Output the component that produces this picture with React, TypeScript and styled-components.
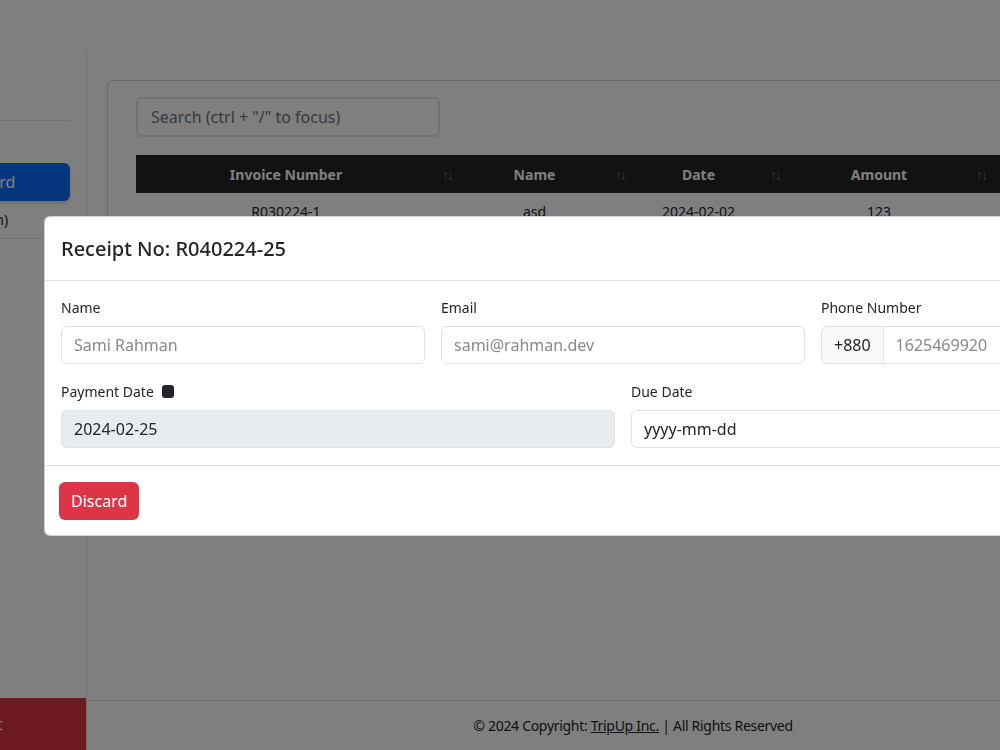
import styled, { createGlobalStyle } from 'styled-components';
import { LogOut } from 'lucide-react';

const GlobalStyle = createGlobalStyle`
  html, body {
    margin: 0;
    height: 100%;
    overflow: hidden;
  }
  body {
    font-family: "Noto Sans", "Open Sans", sans-serif;
    color: #212529;
    background: #ffffff;
  }
  #root {
    height: 100%;
  }
  * {
    box-sizing: border-box;
  }
`;

// the shell is wider than the window; the view sits scrolled to the right
const Shell = styled.div`
  display: grid;
  grid-template-rows: 52px 1fr;
  width: 1317px;
  height: 750px;
  margin-left: -138px;
`;

const TopBar = styled.header`
  background: #ffffff;
`;

const Row = styled.div`
  display: flex;
  min-height: 0;
`;

const Sidebar = styled.aside`
  width: 225px;
  flex-shrink: 0;
  display: flex;
  flex-direction: column;
  border-right: 1px solid #dee2e6;
`;

const Brand = styled.div`
  height: 68px;
  display: flex;
  align-items: center;
  padding: 0 16px;
  font-weight: 600;
  font-size: 18px;
`;

const Divider = styled.hr`
  margin: 0 16px;
  border: none;
  border-top: 1px solid #dee2e6;
`;

const NavButton = styled.a`
  display: flex;
  align-items: center;
  justify-content: center;
  height: 38px;
  margin: 42px 16px 0;
  border-radius: 6px;
  background: #0d6efd;
  color: #ffffff;
  font-size: 16px;
  text-decoration: none;
  box-shadow: 0 2px 4px rgba(0, 0, 0, 0.15);
`;

const NavItem = styled.a`
  display: flex;
  align-items: center;
  justify-content: center;
  height: 38px;
  padding-right: 24px;
  border-bottom: 1px solid #dee2e6;
  color: #212529;
  font-size: 14px;
  text-decoration: none;
`;

const LogoutButton = styled.button`
  margin-top: auto;
  height: 52px;
  display: flex;
  align-items: center;
  justify-content: center;
  gap: 8px;
  padding-right: 26px;
  border: none;
  background: #dc3545;
  color: #ffffff;
  font-family: inherit;
  font-size: 16px;
`;

const Main = styled.main`
  flex: 1;
  display: flex;
  flex-direction: column;
  min-width: 0;
`;

const Content = styled.div`
  flex: 1;
  padding: 28px 20px 0;
`;

const Card = styled.section`
  border: 1px solid rgba(0, 0, 0, 0.175);
  border-radius: 6px;
  padding: 16px 28px 24px;
  box-shadow: 0 1px 3px rgba(0, 0, 0, 0.06);
`;

const SearchInput = styled.input`
  width: 304px;
  height: 40px;
  border: 2px solid #dee2e6;
  border-radius: 6px;
  padding: 0 13px;
  font-family: inherit;
  font-size: 16px;
  color: #212529;
  &::placeholder {
    color: #6c757d;
  }
`;

const Table = styled.table`
  width: 100%;
  margin-top: 18px;
  border-collapse: collapse;
  table-layout: fixed;
`;

const Th = styled.th<{ $w?: number }>`
  position: relative;
  width: ${(p) => (p.$w ? `${p.$w}px` : 'auto')};
  height: 38px;
  padding: 0 24px 0 0;
  background: #212529;
  color: #ffffff;
  font-size: 14px;
  font-weight: 700;
  text-align: center;
`;

const SortIcon = styled.span`
  position: absolute;
  right: 8px;
  top: 50%;
  transform: translateY(-50%);
  color: #6c757d;
  font-size: 14px;
  font-weight: 400;
  letter-spacing: -2px;
`;

const Td = styled.td`
  height: 38px;
  padding: 0 24px 0 0;
  border-bottom: 1px solid #dee2e6;
  font-size: 14px;
  text-align: center;
`;

const Footer = styled.footer`
  height: 50px;
  display: flex;
  align-items: center;
  justify-content: center;
  border-top: 1px solid #dee2e6;
  font-size: 14px;
  letter-spacing: -0.3px;
  a {
    color: inherit;
  }
`;

const Backdrop = styled.div`
  position: fixed;
  inset: 0;
  background: rgba(0, 0, 0, 0.5);
`;

const Modal = styled.div`
  position: fixed;
  top: 216px;
  left: 44px;
  width: 1158px;
  background: #ffffff;
  border: 1px solid rgba(0, 0, 0, 0.175);
  border-radius: 6px;
`;

const ModalHeader = styled.div`
  padding: 20px 16px 19px;
  border-bottom: 1px solid #dee2e6;
`;

const ModalTitle = styled.h5`
  margin: 0;
  font-size: 20px;
  font-weight: 500;
  line-height: 24px;
`;

const ModalBody = styled.div`
  padding: 16px 16px 17px;
`;

const FieldRow = styled.div<{ $cols: number }>`
  display: grid;
  grid-template-columns: repeat(${(p) => p.$cols}, 1fr);
  column-gap: 16px;
  & + & {
    margin-top: 17px;
  }
`;

const Label = styled.label`
  display: flex;
  align-items: center;
  gap: 8px;
  height: 21px;
  margin-bottom: 8px;
  font-size: 14px;
`;

const Check = styled.span`
  width: 12px;
  height: 13px;
  border-radius: 3px;
  background: #212529;
`;

const Input = styled.input<{ $muted?: boolean }>`
  width: 100%;
  height: 38px;
  padding: 6px 12px;
  border: 1px solid #dee2e6;
  border-radius: 6px;
  background: ${(p) => (p.$muted ? '#e9ecef' : '#ffffff')};
  font-family: inherit;
  font-size: 16px;
  color: #212529;
  &::placeholder {
    color: #858a8f;
  }
`;

const InputGroup = styled.div`
  display: flex;
  ${Input} {
    border-radius: 0 6px 6px 0;
    border-left: none;
  }
`;

const Addon = styled.span`
  display: flex;
  align-items: center;
  height: 38px;
  padding: 0 12px;
  border: 1px solid #dee2e6;
  border-radius: 6px 0 0 6px;
  background: #f8f9fa;
  font-size: 16px;
`;

const ModalFooter = styled.div`
  display: flex;
  padding: 16px 14px 15px;
  border-top: 1px solid #dee2e6;
`;

const DangerButton = styled.button`
  height: 38px;
  padding: 0 12px;
  border: none;
  border-radius: 6px;
  background: #dc3545;
  color: #ffffff;
  font-family: inherit;
  font-size: 16px;
`;

const columns = [
  { label: 'Invoice Number', w: 324 },
  { label: 'Name', w: 173 },
  { label: 'Date', w: 155 },
  { label: 'Amount', w: 206 },
  { label: 'Actions' },
];

const rows = [
  ['R030224-1', 'asd', '2024-02-02', '123', ''],
  ['R030224-2', 'John Doe', '2024-02-03', '450', ''],
  ['R040224-3', 'Jane Smith', '2024-02-04', '980', ''],
];

const App = () => {
  return (
    <>
      <GlobalStyle />
      <Shell>
        <TopBar />
        <Row>
          <Sidebar>
            <Brand>TripUp</Brand>
            <Divider />
            <NavButton href="#">Dashboard</NavButton>
            <NavItem href="#">Users (Admin)</NavItem>
            <LogoutButton>
              <LogOut size={16} />
              Logout
            </LogoutButton>
          </Sidebar>
          <Main>
            <Content>
              <Card>
                <SearchInput placeholder={'Search (ctrl + "/" to focus)'} />
                <Table>
                  <thead>
                    <tr>
                      {columns.map((c) => (
                        <Th key={c.label} $w={c.w}>
                          {c.label}
                          {c.w && <SortIcon>↑↓</SortIcon>}
                        </Th>
                      ))}
                    </tr>
                  </thead>
                  <tbody>
                    {rows.map((r) => (
                      <tr key={r[0]}>
                        {r.map((cell, i) => (
                          <Td key={i}>{cell}</Td>
                        ))}
                      </tr>
                    ))}
                  </tbody>
                </Table>
              </Card>
            </Content>
            <Footer>
              © 2024 Copyright:&nbsp;<a href="#">TripUp Inc.</a>&nbsp;| All Rights Reserved
            </Footer>
          </Main>
        </Row>
      </Shell>
      <Backdrop />
      <Modal>
        <ModalHeader>
          <ModalTitle>Receipt No: R040224-25</ModalTitle>
        </ModalHeader>
        <ModalBody>
          <FieldRow $cols={3}>
            <div>
              <Label>Name</Label>
              <Input placeholder="Sami Rahman" />
            </div>
            <div>
              <Label>Email</Label>
              <Input placeholder="sami@rahman.dev" />
            </div>
            <div>
              <Label>Phone Number</Label>
              <InputGroup>
                <Addon>+880</Addon>
                <Input placeholder="1625469920" />
              </InputGroup>
            </div>
          </FieldRow>
          <FieldRow $cols={2}>
            <div>
              <Label>
                Payment Date <Check />
              </Label>
              <Input $muted readOnly value="2024-02-25" />
            </div>
            <div>
              <Label>Due Date</Label>
              <Input readOnly value="yyyy-mm-dd" />
            </div>
          </FieldRow>
        </ModalBody>
        <ModalFooter>
          <DangerButton>Discard</DangerButton>
        </ModalFooter>
      </Modal>
    </>
  );
};

export default App;
